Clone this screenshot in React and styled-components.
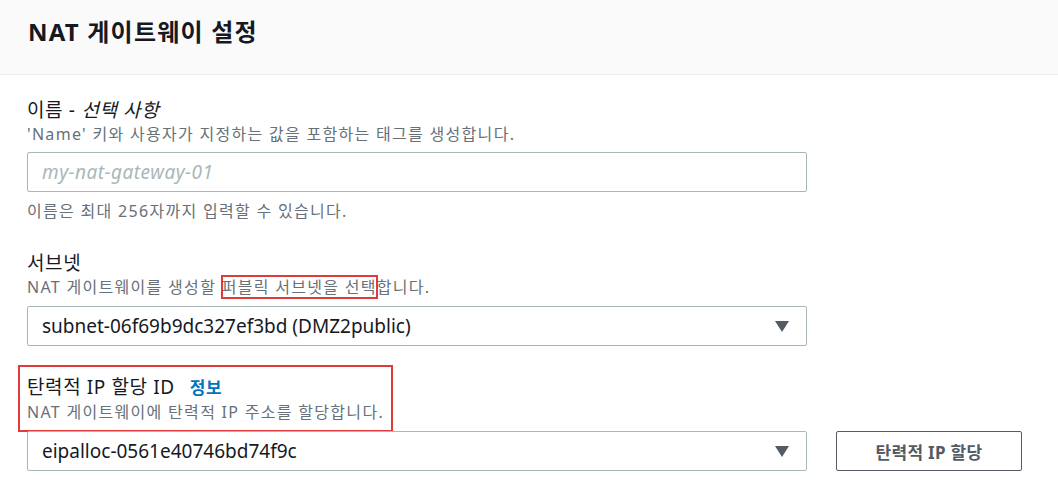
import React from 'react';
import styled, { createGlobalStyle } from 'styled-components';

const GlobalStyle = createGlobalStyle`
  body {
    margin: 0;
    background: #ffffff;
    font-family: "Noto Sans", "Noto Sans CJK KR", sans-serif;
    color: #16191f;
  }
`;

const Panel = styled.div`
  width: 1058px;
  height: 492px;
  overflow: hidden;
  background: #ffffff;
`;

const Header = styled.div`
  display: flex;
  align-items: center;
  height: 60px;
  padding: 0 28px 14px;
  background: #fafafa;
  border-bottom: 1px solid #eaeded;
`;

const Title = styled.h2`
  margin: 0;
  font-size: 24px;
  font-weight: 700;
  letter-spacing: 1.2px;
  color: #16191f;
`;

const Body = styled.div`
  display: flex;
  flex-direction: column;
  gap: 28px;
  padding: 22px 27px 0;
`;

const Field = styled.div`
  display: flex;
  flex-direction: column;
`;

const Label = styled.div`
  display: flex;
  align-items: baseline;
  font-size: 19px;
  line-height: 26px;
  letter-spacing: 0.6px;
  color: #16191f;
`;

const Optional = styled.i`
  margin-left: 6px;
  font-style: italic;
`;

const InfoLink = styled.a`
  margin-left: 15px;
  font-size: 17px;
  font-weight: 700;
  color: #0073bb;
  text-decoration: none;
`;

const Description = styled.div`
  font-size: 16px;
  line-height: 22px;
  letter-spacing: 1.3px;
  color: #687078;
`;

const Constraint = styled(Description)`
  margin-top: 8px;
`;

const Marked = styled.span`
  outline: 2px solid #df3b3b;
  outline-offset: -1px;
`;

const MarkedBlock = styled.div`
  align-self: flex-start;
  outline: 2px solid #df3b3b;
  outline-offset: 7px;
`;

const TextInput = styled.input`
  box-sizing: border-box;
  width: 780px;
  height: 40px;
  margin-top: 7px;
  padding: 0 14px;
  border: 1px solid #aab7b8;
  border-radius: 2px;
  font-family: "Noto Sans", "Noto Sans CJK KR", sans-serif;
  font-size: 19px;
  color: #16191f;
  outline: none;
  &::placeholder {
    color: #aab7b8;
    font-style: italic;
    letter-spacing: 0.5px;
  }
`;

const ControlRow = styled.div`
  display: flex;
  align-items: center;
  gap: 29px;
  margin-top: 8px;
`;

const SelectBox = styled.div`
  box-sizing: border-box;
  display: flex;
  align-items: center;
  justify-content: space-between;
  width: 780px;
  height: 40px;
  padding: 0 17px 0 14px;
  border: 1px solid #aab7b8;
  border-radius: 2px;
  font-size: 19px;
  color: #16191f;
`;

const Arrow = styled.svg`
  width: 14px;
  height: 11px;
  fill: #545b64;
`;

const Button = styled.button`
  box-sizing: border-box;
  width: 186px;
  height: 40px;
  border: 1px solid #545b64;
  border-radius: 2px;
  background: #ffffff;
  font-family: "Noto Sans", "Noto Sans CJK KR", sans-serif;
  font-size: 17px;
  font-weight: 700;
  letter-spacing: 0.3px;
  color: #545b64;
`;

const Select = ({ value }) => (
  <SelectBox>
    <span>{value}</span>
    <Arrow viewBox="0 0 14 11">
      <polygon points="0,0 14,0 7,11" />
    </Arrow>
  </SelectBox>
);

const App = () => {
  return (
    <Panel>
      <GlobalStyle />
      <Header>
        <Title>NAT 게이트웨이 설정</Title>
      </Header>
      <Body>
        <Field>
          <Label>
            이름 -<Optional>선택 사항</Optional>
          </Label>
          <Description>'Name' 키와 사용자가 지정하는 값을 포함하는 태그를 생성합니다.</Description>
          <TextInput placeholder="my-nat-gateway-01" />
          <Constraint>이름은 최대 256자까지 입력할 수 있습니다.</Constraint>
        </Field>

        <Field>
          <Label>서브넷</Label>
          <Description>
            NAT 게이트웨이를 생성할 <Marked>퍼블릭 서브넷을 선택</Marked>합니다.
          </Description>
          <ControlRow>
            <Select value="subnet-06f69b9dc327ef3bd (DMZ2public)" />
          </ControlRow>
        </Field>

        <Field>
          <MarkedBlock>
            <Label>
              탄력적 IP 할당 ID
              <InfoLink href="#">정보</InfoLink>
            </Label>
            <Description>NAT 게이트웨이에 탄력적 IP 주소를 할당합니다.</Description>
          </MarkedBlock>
          <ControlRow>
            <Select value="eipalloc-0561e40746bd74f9c" />
            <Button>탄력적 IP 할당</Button>
          </ControlRow>
        </Field>
      </Body>
    </Panel>
  );
};

export default App;
